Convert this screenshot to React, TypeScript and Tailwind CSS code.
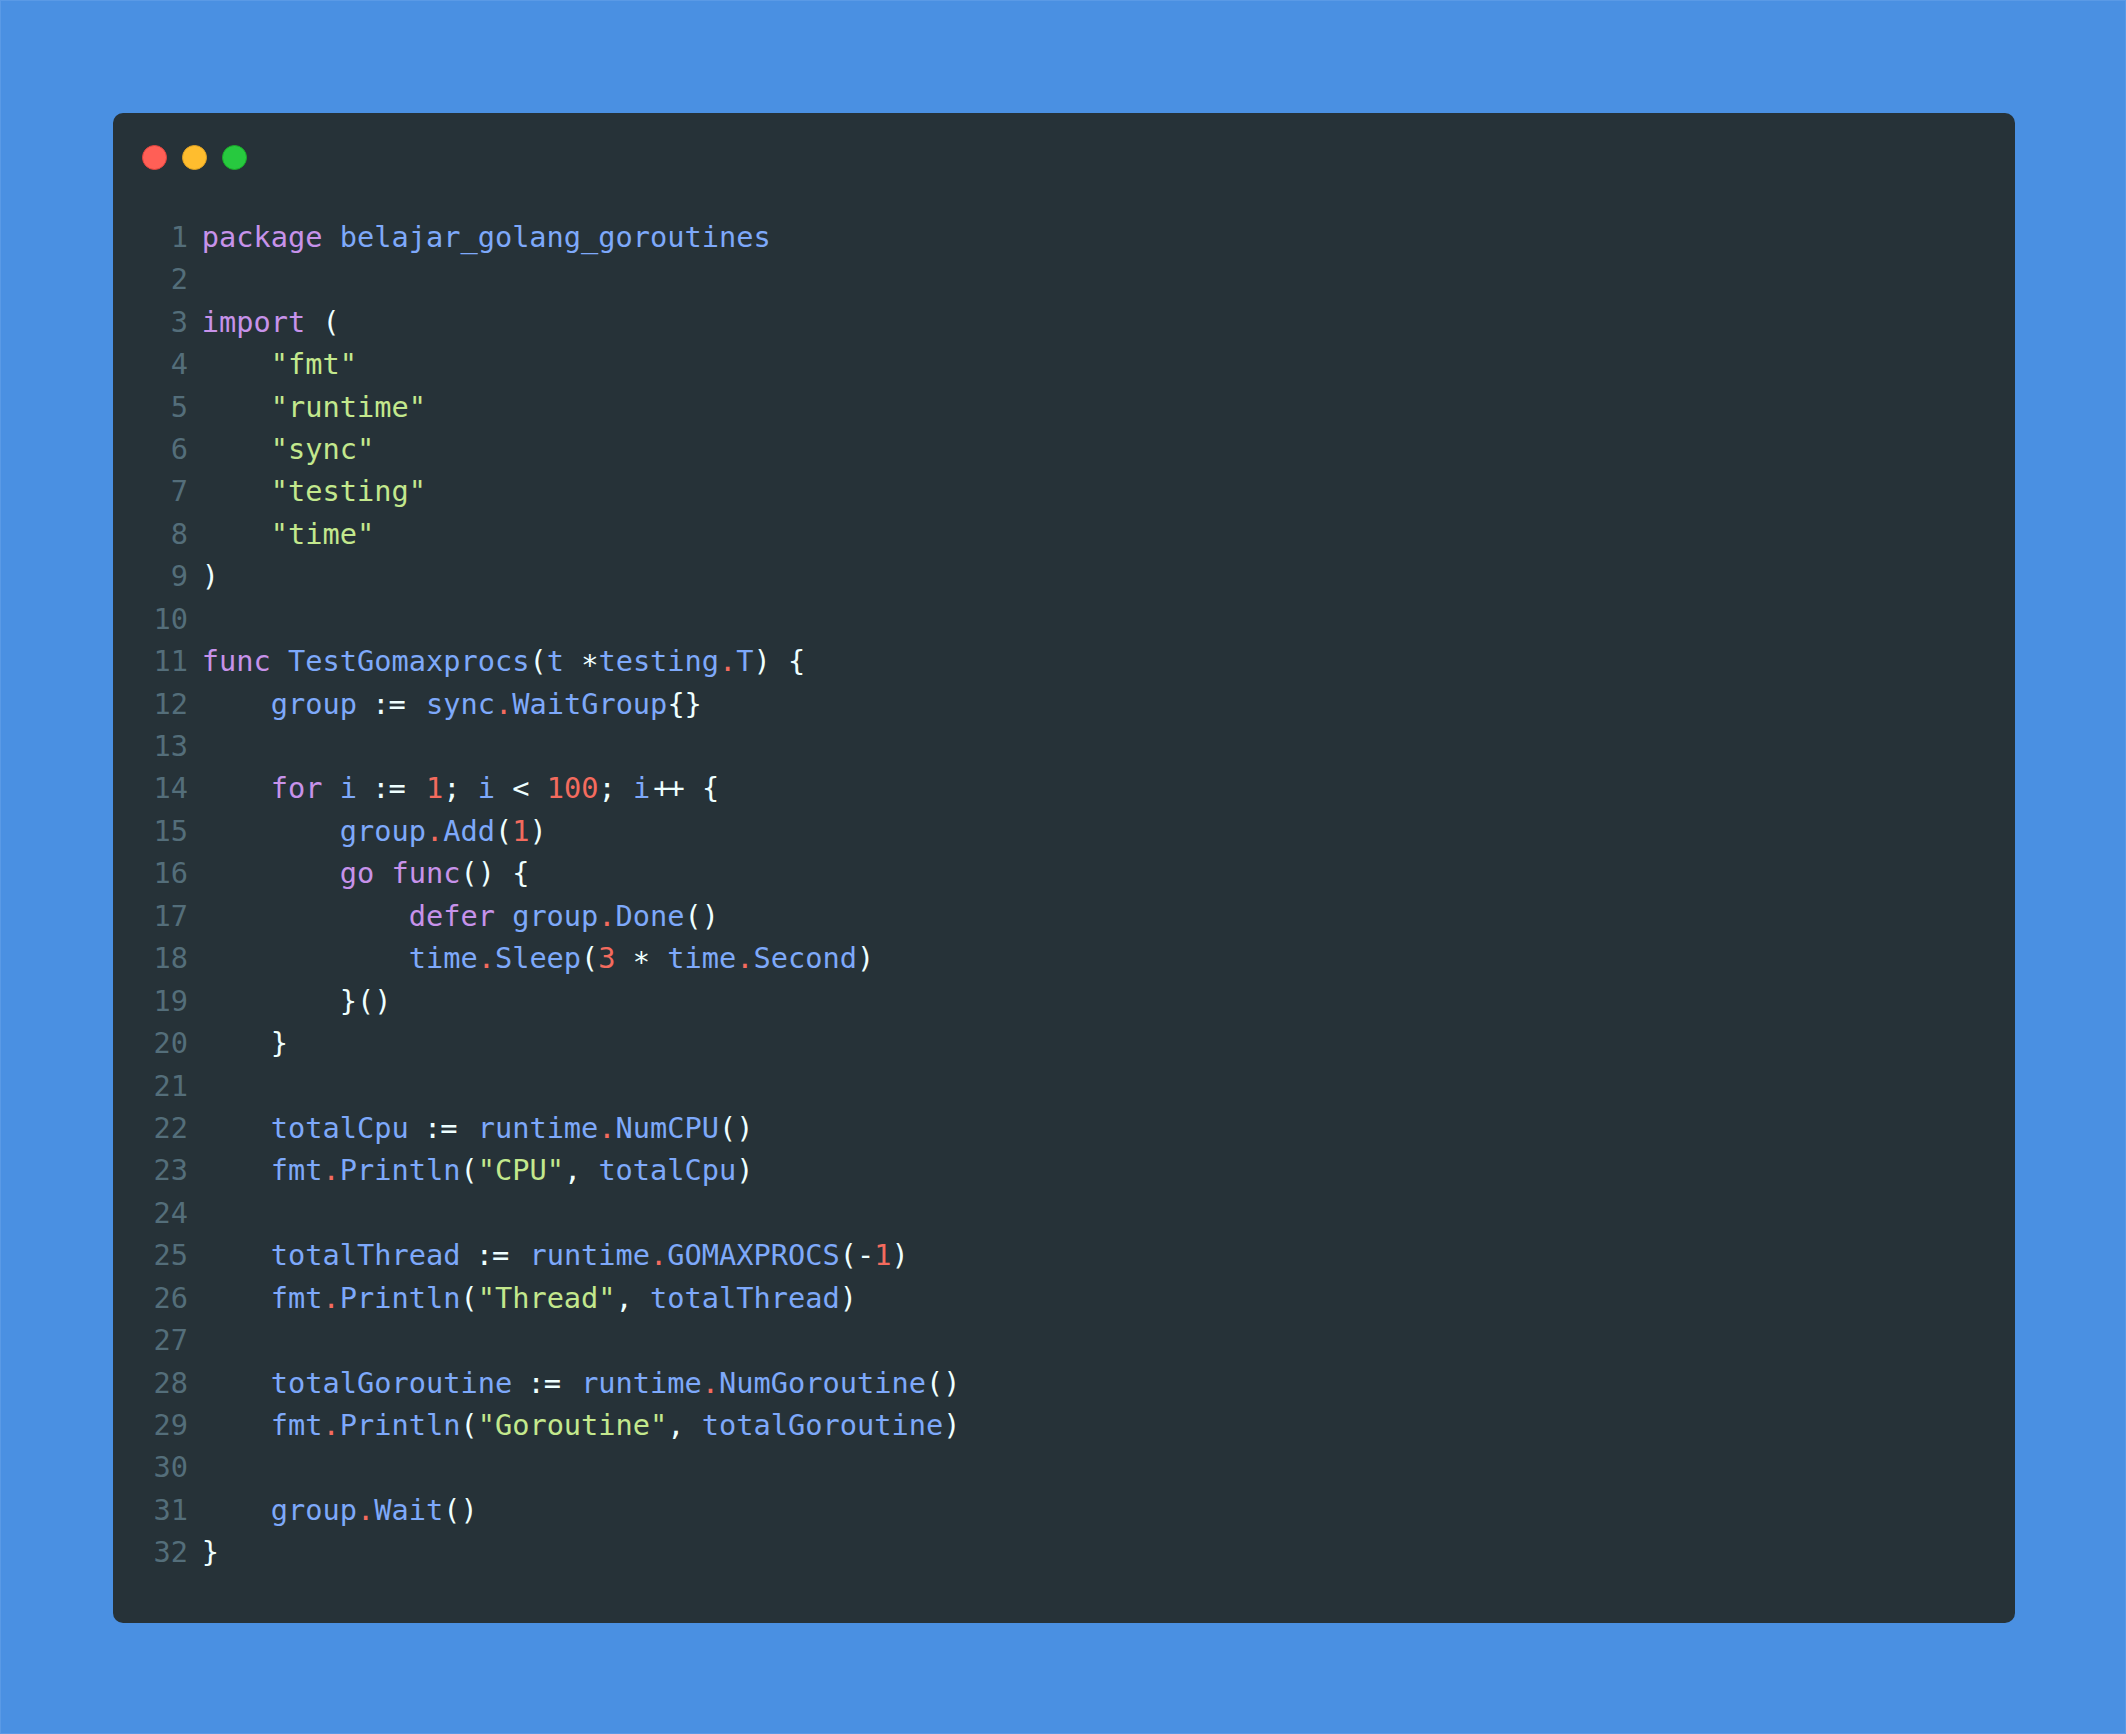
const tone = {
  k: 'text-[#c792ea]',
  v: 'text-[#7ea9fa]',
  s: 'text-[#c3e88d]',
  n: 'text-[#f46b5e]',
  p: 'text-[#eeffff]',
  // Fira-style ligatures, squeezed into two cells
  o: 'inline-block w-[2ch] text-center tracking-[-3px] text-[#eeffff]',
  c: 'inline-block w-[2ch] -translate-x-[2px] tracking-[-1px] text-[#eeffff]',
  a: 'inline-block translate-y-[4px] text-[#eeffff]',
}

type Tone = keyof typeof tone
type Token = [Tone, string]

const D: Token = ['n', '.']
const S: Token = ['p', ' ']
const A: Token = ['c', ':=']

const code: Token[][] = [
  [['k', 'package'], ['v', ' belajar_golang_goroutines']],
  [],
  [['k', 'import'], ['p', ' (']],
  [['s', '    "fmt"']],
  [['s', '    "runtime"']],
  [['s', '    "sync"']],
  [['s', '    "testing"']],
  [['s', '    "time"']],
  [['p', ')']],
  [],
  [['k', 'func'], ['v', ' TestGomaxprocs'], ['p', '('], ['v', 't '], ['a', '*'], ['v', 'testing'], D, ['v', 'T'], ['p', ') {']],
  [['v', '    group'], S, A, S, ['v', 'sync'], D, ['v', 'WaitGroup'], ['p', '{}']],
  [],
  [['k', '    for'], ['v', ' i'], S, A, S, ['n', '1'], ['p', '; '], ['v', 'i'], ['p', ' < '], ['n', '100'], ['p', '; '], ['v', 'i'], ['o', '++'], ['p', ' {']],
  [['v', '        group'], D, ['v', 'Add'], ['p', '('], ['n', '1'], ['p', ')']],
  [['k', '        go func'], ['p', '() {']],
  [['k', '            defer'], ['v', ' group'], D, ['v', 'Done'], ['p', '()']],
  [['v', '            time'], D, ['v', 'Sleep'], ['p', '('], ['n', '3'], S, ['a', '*'], S, ['v', 'time'], D, ['v', 'Second'], ['p', ')']],
  [['p', '        }()']],
  [['p', '    }']],
  [],
  [['v', '    totalCpu'], S, A, S, ['v', 'runtime'], D, ['v', 'NumCPU'], ['p', '()']],
  [['v', '    fmt'], D, ['v', 'Println'], ['p', '('], ['s', '"CPU"'], ['p', ', '], ['v', 'totalCpu'], ['p', ')']],
  [],
  [['v', '    totalThread'], S, A, S, ['v', 'runtime'], D, ['v', 'GOMAXPROCS'], ['p', '(-'], ['n', '1'], ['p', ')']],
  [['v', '    fmt'], D, ['v', 'Println'], ['p', '('], ['s', '"Thread"'], ['p', ', '], ['v', 'totalThread'], ['p', ')']],
  [],
  [['v', '    totalGoroutine'], S, A, S, ['v', 'runtime'], D, ['v', 'NumGoroutine'], ['p', '()']],
  [['v', '    fmt'], D, ['v', 'Println'], ['p', '('], ['s', '"Goroutine"'], ['p', ', '], ['v', 'totalGoroutine'], ['p', ')']],
  [],
  [['v', '    group'], D, ['v', 'Wait'], ['p', '()']],
  [['p', '}']],
]

export default function App() {
  return (
    <div className="h-[1734px] w-[2126px] border border-[#5a9ae6] bg-[#4a90e2] pt-[112px] pl-[112px]">
      <div className="h-[1510px] w-[1902px] rounded-[10px] bg-[#263238] pt-[31.5px] pl-[29px]">
        <div className="flex gap-[15px]">
          <div className="size-[25px] rounded-full border border-[#e0443e] bg-[#ff5f56]" />
          <div className="size-[25px] rounded-full border border-[#dea123] bg-[#ffbd2e]" />
          <div className="size-[25px] rounded-full border border-[#1aab29] bg-[#27c93f]" />
        </div>
        <div className="mt-[46.3px] ml-[11.5px] font-['DejaVu_Sans_Mono',monospace] text-[28.65px] leading-[42.45px] whitespace-pre">
          {code.map((line, i) => (
            <div key={i} className="flex h-[42.45px] gap-[13.75px]">
              <span className="w-[34.5px] text-right text-[#546e7a]">{i + 1}</span>
              <span>
                {line.map(([t, text], j) => (
                  <span key={j} className={tone[t]}>{text}</span>
                ))}
              </span>
            </div>
          ))}
        </div>
      </div>
    </div>
  )
}
